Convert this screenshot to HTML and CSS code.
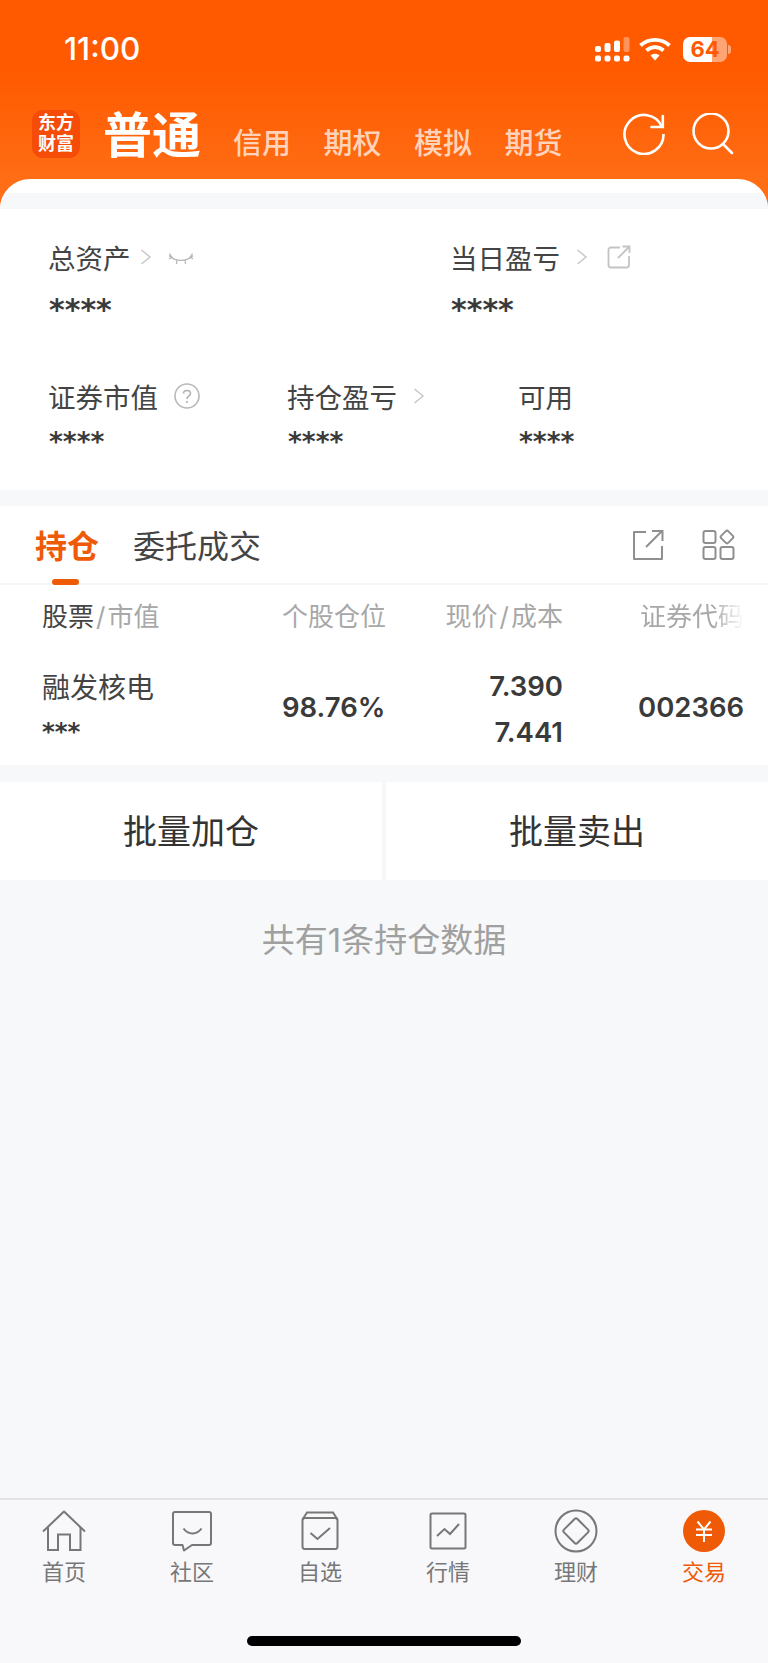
FILE: index.html
```html
<!DOCTYPE html>
<html lang="zh-CN">
  <head>
    <meta charset="UTF-8" />
    <meta name="viewport" content="width=device-width, initial-scale=1.0" />
    <title>交易</title>
    <link rel="stylesheet" href="styles.css">
  </head>
  <body>
    <div class="app">
      <div class="top">
        <div class="status">
          <span class="clock">11:00</span>
          <div class="status-icons">
            <svg class="signal" width="35" height="25" viewBox="0 0 35 25">
              <rect x="0" y="9" width="6" height="6" rx="2" fill="#fff"/>
              <rect x="9.5" y="6" width="6" height="9" rx="2" fill="#fff"/>
              <rect x="19" y="3.500" width="6" height="11.500" rx="2" fill="#fff"/>
              <rect x="28.500" y="0" width="6" height="15" rx="2" fill="#fff" fill-opacity=".35"/>
              <rect x="0" y="18.500" width="6" height="6" rx="2" fill="#fff"/>
              <rect x="9.500" y="18.500" width="6" height="6" rx="2" fill="#fff"/>
              <rect x="19" y="18.500" width="6" height="6" rx="2" fill="#fff"/>
              <rect x="28.500" y="18.500" width="6" height="6" rx="2" fill="#fff"/>
            </svg>
            <svg class="wifi" width="32" height="24" viewBox="0 0 32 24">
              <path d="M1.500 8.500C9.500 1 22.500 1 30.500 8.500" fill="none" stroke="#fff" stroke-width="3.800"/>
              <path d="M7.500 13.500C12.500 9 19.500 9 24.500 13.500" fill="none" stroke="#fff" stroke-width="3.800"/>
              <path d="M11.500 18.500C14 16 18 16 20.500 18.500L16 23.500Z" fill="#fff"/>
            </svg>
            <div class="battery">
              <div class="battery-level">64</div>
              <i class="battery-nub"></i>
            </div>
          </div>
        </div>
        <div class="nav">
          <div class="logo"><span>东方</span><span>财富</span></div>
          <div class="nav-current">普通</div>
          <div class="nav-links">
            <span>信用</span>
            <span>期权</span>
            <span>模拟</span>
            <span>期货</span>
          </div>
          <div class="nav-icons">
            <svg width="42" height="42" viewBox="0 0 42 42" fill="none" stroke="#fff" stroke-width="2.600">
              <path d="M40.500 21A19.500 19.500 0 1 1 38.800 13.500"/>
              <path d="M39.800 3V14H28.500" stroke-linecap="round"/>
            </svg>
            <svg width="42" height="42" viewBox="0 0 42 42" fill="none" stroke="#fff" stroke-width="2.600">
              <circle cx="19" cy="18" r="17.500"/>
              <path d="M31 31L40 40" stroke-linecap="round"/>
            </svg>
          </div>
        </div>
        <div class="sheet-lip"><div class="sheet-strip"></div></div>
      </div>

      <div class="assets">
        <div class="assets-row">
          <div class="asset asset-wide">
            <div class="asset-label">
              总资产
              <svg class="chev chev-tight" width="12" height="18" viewBox="0 0 12 18"><path d="M1.500 2L10 9L1.500 16"/></svg>
              <svg class="eye" width="26" height="14" viewBox="0 0 26 14" fill="none" stroke="#b5b5b5" stroke-width="1.200">
                <path d="M1 2.500C7 9 19 9 25 2.500"/>
                <path d="M1.500 0.500L4.500 5M24.500 0.500L21.500 5M9 7L8.500 11M17 7L17.500 11M1 6L3 4.500M25 6L23 4.500"/>
              </svg>
            </div>
            <div class="stars stars-big">****</div>
          </div>
          <div class="asset">
            <div class="asset-label">
              当日盈亏
              <svg class="chev chev-wide" width="12" height="18" viewBox="0 0 12 18"><path d="M1.500 2L10 9L1.500 16"/></svg>
              <svg class="share" width="24" height="24" viewBox="0 0 24 24" fill="none" stroke="#c4c4c4" stroke-width="1.800">
                <path d="M13 2.500H4A2.500 2.500 0 0 0 1.500 5V20A2.500 2.500 0 0 0 4 22.500H19.500A2.500 2.500 0 0 0 22 20V11"/>
                <path d="M11 13L22 2M15.500 1.500H22.500V8"/>
              </svg>
            </div>
            <div class="stars stars-big">****</div>
          </div>
        </div>
        <div class="assets-row assets-sub">
          <div class="asset asset-market">
            <div class="asset-label">
              证券市值
              <svg class="help" width="26" height="26" viewBox="0 0 26 26">
                <circle cx="13" cy="13" r="12" fill="none" stroke="#b8b8b8" stroke-width="1.600"/>
                <path d="M9.500 10.500C9.500 6.500 16.500 6.500 16.500 10.500C16.500 13 13 13 13 16" fill="none" stroke="#b0b0b0" stroke-width="1.600"/>
                <circle cx="13" cy="19" r="1.100" fill="#b0b0b0"/>
              </svg>
            </div>
            <div class="stars">****</div>
          </div>
          <div class="asset asset-profit">
            <div class="asset-label">
              持仓盈亏
              <svg class="chev chev-wide" width="12" height="18" viewBox="0 0 12 18"><path d="M1.500 2L10 9L1.500 16"/></svg>
            </div>
            <div class="stars">****</div>
          </div>
          <div class="asset">
            <div class="asset-label">可用</div>
            <div class="stars">****</div>
          </div>
        </div>
      </div>

      <div class="holdings">
        <div class="tabs">
          <div class="tab tab-active">持仓</div>
          <div class="tab">委托成交</div>
          <div class="tab-icons">
            <svg width="32" height="32" viewBox="0 0 32 32" fill="none" stroke="#8f8f8f" stroke-width="2">
              <path d="M14 3H2V30H30V17" stroke-linejoin="round"/>
              <path d="M14 18L30 2M20 2H30.500V12"/>
            </svg>
            <svg width="33" height="32" viewBox="0 0 33 32" fill="none" stroke="#8f8f8f" stroke-width="2">
              <rect x="1.500" y="2" width="12" height="12" rx="2"/>
              <rect x="1.500" y="18" width="12" height="12" rx="2"/>
              <rect x="18.500" y="18" width="13" height="12" rx="2"/>
              <rect x="20" y="3" width="10" height="10" rx="2" transform="rotate(45 25 8)"/>
            </svg>
          </div>
        </div>
        <div class="grid grid-head">
          <div><span class="head-strong">股票</span><span class="slash">/</span>市值</div>
          <div class="num">个股仓位</div>
          <div class="num">现价<span class="slash">/</span>成本</div>
          <div class="code-head">证券代码</div>
        </div>
        <div class="grid grid-row">
          <div class="stock">
            <div class="stock-name">融发核电</div>
            <div class="stars stars-row">***</div>
          </div>
          <div class="num value value-single">98.76%</div>
          <div class="num value price">
            <div>7.390</div>
            <div>7.441</div>
          </div>
          <div class="value value-single value-code">002366</div>
        </div>
      </div>

      <div class="actions">
        <div class="action">批量加仓</div>
        <div class="action">批量卖出</div>
      </div>

      <div class="total">共有1条持仓数据</div>

      <div class="tabbar">
        <div class="tabbar-items">
          <div class="tabbar-item">
            <svg width="44" height="42" viewBox="0 0 44 42" fill="none" stroke="#777" stroke-width="2">
              <path d="M1 21.500L22 1.500L43 21.500" stroke-linejoin="round"/>
              <path d="M6 17V40H16V24.500H28V40H38.500V17"/>
              <path d="M6 40H16M28 40H38.500"/>
            </svg>
            <span>首页</span>
          </div>
          <div class="tabbar-item">
            <svg width="40" height="42" viewBox="0 0 40 42" fill="none" stroke="#777" stroke-width="2">
              <path d="M3 2H37A2 2 0 0 1 39 4V33A2 2 0 0 1 37 35H20L12 40.500L10.500 35H3A2 2 0 0 1 1 33V4A2 2 0 0 1 3 2Z" stroke-linejoin="round"/>
              <path d="M11.500 18.500C16 25 25 25 29.500 18.500"/>
            </svg>
            <span>社区</span>
          </div>
          <div class="tabbar-item">
            <svg width="38" height="40" viewBox="0 0 38 40" fill="none" stroke="#777" stroke-width="2">
              <path d="M1.500 8.500L6 1.500H32L36.500 8.500"/>
              <rect x="1.500" y="7" width="35" height="31" rx="2.500"/>
              <path d="M9.500 22L16.500 28L29 17"/>
            </svg>
            <span>自选</span>
          </div>
          <div class="tabbar-item">
            <svg width="38" height="38" viewBox="0 0 38 38" fill="none" stroke="#777" stroke-width="2">
              <rect x="1.500" y="1.500" width="35" height="35" rx="1.500"/>
              <path d="M8 24L15.500 17L21 22L30 12"/>
            </svg>
            <span>行情</span>
          </div>
          <div class="tabbar-item">
            <svg width="44" height="44" viewBox="0 0 44 44" fill="none" stroke="#777" stroke-width="2">
              <circle cx="22" cy="22" r="20.500"/>
              <rect x="12.500" y="12.500" width="19" height="19" rx="2" transform="rotate(45 22 22)"/>
            </svg>
            <span>理财</span>
          </div>
          <div class="tabbar-item tabbar-active">
            <svg width="42" height="42" viewBox="0 0 42 42">
              <circle cx="21" cy="21" r="21" fill="#ee5a06"/>
              <path d="M14.500 11.500L21 19.500L27.500 11.500M21 19.500V32M13 19.500H29M13 25H29" fill="none" stroke="#fff" stroke-width="2"/>
            </svg>
            <span>交易</span>
          </div>
        </div>
        <div class="home-bar"></div>
      </div>
    </div>
  </body>
</html>
```

FILE: styles.css
```css
* {
  margin: 0;
  padding: 0;
  box-sizing: border-box;
}
body {
  width: 768px;
  height: 1663px;
  overflow: hidden;
  background-color: #f7f8fa;
  color: #333;
  font-family: Inter, "Noto Sans CJK SC", sans-serif;
}
svg {
  display: block;
  flex-shrink: 0;
}
.app {
  height: 1663px;
  display: flex;
  flex-direction: column;
}

/* orange header */
.top {
  height: 209px;
  background: linear-gradient(#ff5a00 0, #ff5a00 70px, #ff721a 209px);
  color: #fff;
}
.status {
  height: 98px;
  padding: 0 41px 0 64px;
  display: flex;
  justify-content: space-between;
  align-items: center;
}
.clock {
  margin-bottom: 1px;
  font-size: 31.500px;
  font-weight: 500;
}
.status-icons {
  display: flex;
  align-items: center;
  gap: 11px;
}
.wifi {
  margin: 0 1px 0 -2px;
}
.battery {
  position: relative;
  width: 44px;
  height: 25px;
}
.battery-level {
  width: 100%;
  height: 100%;
  border-radius: 7px;
  background: linear-gradient(90deg, #fff 66%, rgba(255, 255, 255, 0.45) 66%);
  color: #ff5a00;
  font-size: 22px;
  font-weight: 700;
  line-height: 25px;
  text-align: center;
}
.battery-nub {
  position: absolute;
  right: -4px;
  top: 8px;
  width: 3px;
  height: 9px;
  border-radius: 0 3px 3px 0;
  background-color: rgba(255, 255, 255, 0.45);
}
.nav {
  height: 81px;
  padding: 0 34px 9px 32px;
  display: flex;
  align-items: center;
}
.logo {
  width: 48px;
  height: 48px;
  border-radius: 11px;
  background-color: #f54c08;
  display: flex;
  flex-direction: column;
  align-items: center;
  justify-content: center;
  font-family: "Liberation Sans", "Noto Sans CJK SC", sans-serif;
  font-size: 18px;
  font-weight: 700;
  line-height: 21px;
}
.nav-current {
  margin-left: 23px;
  padding-bottom: 5px;
  font-family: "Noto Sans CJK SC", sans-serif;
  font-size: 49px;
  font-weight: 700;
  line-height: 56px;
}
.nav-links {
  margin: 13px 0 0 32px;
  display: flex;
  gap: 32.500px;
  font-family: "Noto Sans CJK SC", sans-serif;
  font-size: 29px;
  font-weight: 500;
  line-height: 40px;
  color: rgba(255, 255, 255, 0.72);
}
.nav-icons {
  margin-left: auto;
  display: flex;
  align-items: center;
  gap: 27px;
}
.sheet-lip {
  height: 30px;
  padding-top: 14px;
  border-radius: 30px 30px 0 0;
  background-color: #fff;
  overflow: hidden;
}
.sheet-strip {
  height: 16px;
  background-color: #f7f8fa;
}

/* asset summary */
.assets {
  height: 281px;
  padding: 28px 0 0 48px;
  background-color: #fff;
}
.assets-row {
  display: flex;
}
.assets-sub {
  margin-top: 51px;
}
.asset-wide {
  width: 402px;
}
.asset-market {
  width: 239px;
}
.asset-profit {
  width: 231px;
}
.asset-label {
  height: 40px;
  display: flex;
  align-items: center;
  font-family: "Noto Sans CJK SC", sans-serif;
  font-size: 27.500px;
  line-height: 40px;
  color: #444;
}
.chev {
  margin-left: 14px;
  fill: none;
  stroke: #c8c8c8;
  stroke-width: 1.500;
}
.chev-tight {
  margin-left: 9px;
}
.chev-wide {
  margin-left: 16px;
}
.eye {
  margin: 5px 0 0 16px;
}
.share {
  margin-left: 19px;
}
.help {
  margin-left: 16px;
}
.stars {
  margin-top: 11px;
  padding-left: 1px;
  font-family: "DejaVu Sans", sans-serif;
  font-size: 26.500px;
  font-weight: 700;
  line-height: 30px;
  color: #3a3a3a;
}
.stars-big {
  margin-top: 18px;
  font-size: 30px;
}
.stars-row {
  margin-top: 0;
  padding-left: 0;
  font-size: 24.500px;
}

/* holdings table */
.holdings {
  margin-top: 16px;
  height: 259px;
  background-color: #fff;
}
.tabs {
  height: 79px;
  padding: 0 33px 0 35px;
  display: flex;
  gap: 34px;
  border-bottom: 2px solid #f4f5f6;
}
.tab {
  position: relative;
  font-family: "Noto Sans CJK SC", sans-serif;
  font-size: 32px;
  line-height: 76px;
  color: #444;
}
.tab-active {
  color: #ee5a06;
  font-weight: 700;
}
.tab-active::after {
  content: "";
  position: absolute;
  left: 17px;
  bottom: -2px;
  width: 27px;
  height: 6px;
  border-radius: 3px;
  background-color: #ee5a06;
}
.tab-icons {
  margin-left: auto;
  display: flex;
  align-items: center;
  gap: 38px;
}
.grid {
  padding-left: 42px;
  display: grid;
  grid-template-columns: 240px 100px 181px 1fr;
}
.grid-head {
  height: 67px;
  padding-bottom: 8px;
  align-items: center;
  font-family: "Noto Sans CJK SC", sans-serif;
  font-size: 26px;
  color: #a8a8a8;
}
.head-strong {
  color: #444;
}
.slash {
  padding: 0 2px;
  font-family: Inter, sans-serif;
}
.num {
  text-align: right;
  white-space: nowrap;
}
.code-head {
  margin-left: 77px;
  white-space: nowrap;
  -webkit-mask-image: linear-gradient(90deg, #000 72px, transparent 104px);
  mask-image: linear-gradient(90deg, #000 72px, transparent 104px);
}
.grid-row {
  height: 113px;
  align-items: center;
}
.stock {
  align-self: start;
  padding-top: 12px;
}
.stock-name {
  font-family: "Noto Sans CJK SC", sans-serif;
  font-size: 28px;
  line-height: 44px;
  color: #444;
  margin-bottom: 9px;
}
.value {
  font-size: 27.500px;
  font-weight: 600;
  color: #3a3a3a;
}
.value-single {
  padding-bottom: 4px;
}
.value-code {
  margin-left: 75px;
}
.price {
  line-height: 46px;
}

/* batch actions */
.actions {
  margin-top: 17px;
  height: 98px;
  display: flex;
  gap: 4px;
}
.action {
  flex: 1;
  background-color: #fff;
  font-family: "Noto Sans CJK SC", sans-serif;
  font-size: 34px;
  line-height: 96px;
  text-align: center;
  color: #333;
}
.total {
  margin-top: 37px;
  font-size: 33px;
  line-height: 46px;
  text-align: center;
  color: #a0a0a0;
}

/* bottom tab bar */
.tabbar {
  margin-top: auto;
  height: 165px;
  border-top: 2px solid #e3e3e6;
  background-color: #f8f8fb;
  display: flex;
  flex-direction: column;
}
.tabbar-items {
  display: grid;
  grid-template-columns: repeat(6, 1fr);
  padding-top: 9px;
}
.tabbar-item {
  display: flex;
  flex-direction: column;
  align-items: center;
  font-family: "Noto Sans CJK SC", sans-serif;
  font-size: 22px;
  color: #777;
}
.tabbar-item svg {
  height: 44px;
}
.tabbar-item span {
  margin-top: 1px;
  line-height: 32px;
}
.tabbar-active {
  color: #ee5a06;
}
.home-bar {
  align-self: center;
  width: 274px;
  height: 10px;
  margin-top: 50px;
  border-radius: 5px;
  background-color: #000;
}
```
